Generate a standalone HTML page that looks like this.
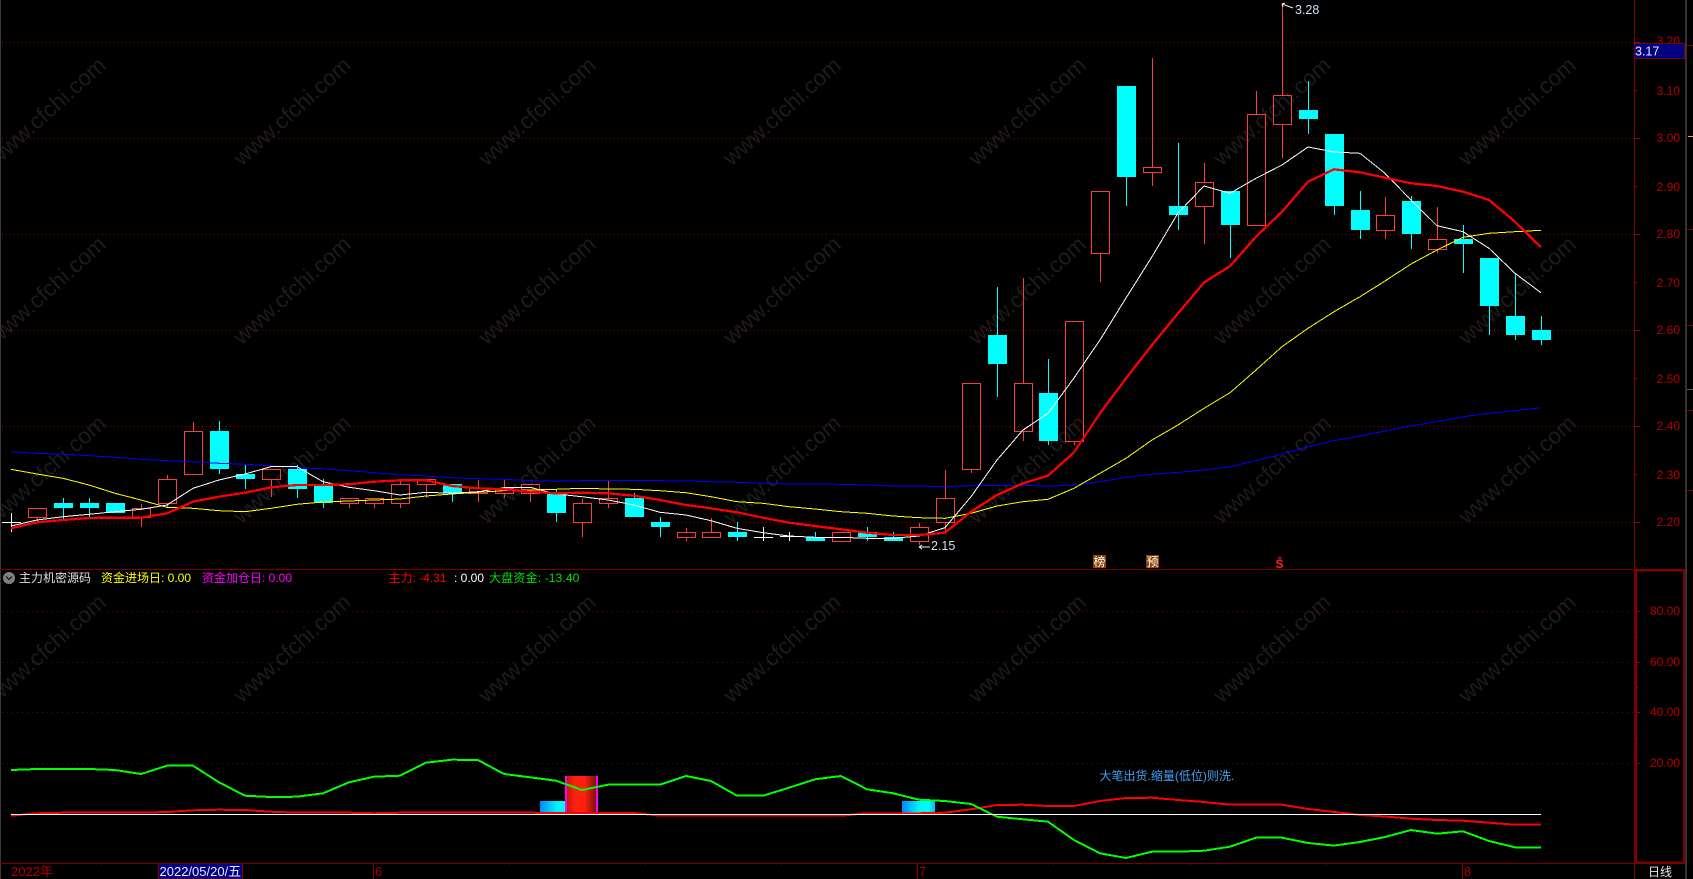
<!DOCTYPE html>
<html><head><meta charset="utf-8"><title>K线</title>
<style>
html,body{margin:0;padding:0;background:#000;width:1693px;height:879px;overflow:hidden}
svg{display:block}
text{font-family:"Liberation Sans","Noto Sans CJK SC",sans-serif;font-size:12px}
.wm text{font-size:22.5px;fill:#1c1c1c;text-anchor:middle}
.ax text{fill:#b80000;text-anchor:end}
</style></head><body>
<svg width="1693" height="879" viewBox="0 0 1693 879" xmlns="http://www.w3.org/2000/svg">
<defs>
<linearGradient id="gr"><stop offset="0" stop-color="#b01808"/><stop offset=".3" stop-color="#ff2010"/><stop offset=".6" stop-color="#ff2010"/><stop offset="1" stop-color="#601008"/></linearGradient>
<linearGradient id="gb1"><stop offset="0" stop-color="#0088ff"/><stop offset=".6" stop-color="#00f0ff"/><stop offset="1" stop-color="#00ffff"/></linearGradient>
<linearGradient id="gb2"><stop offset="0" stop-color="#0088ff"/><stop offset=".5" stop-color="#00f0ff"/><stop offset=".8" stop-color="#00ffff"/><stop offset="1" stop-color="#00b8ff"/></linearGradient>
</defs>
<rect width="1693" height="879" fill="#000"/>
<g class="wm">
<text transform="translate(52 117) rotate(-42)">www.cfchi.com</text><text transform="translate(297 117) rotate(-42)">www.cfchi.com</text><text transform="translate(542 117) rotate(-42)">www.cfchi.com</text><text transform="translate(787 117) rotate(-42)">www.cfchi.com</text><text transform="translate(1032 117) rotate(-42)">www.cfchi.com</text><text transform="translate(1277 117) rotate(-42)">www.cfchi.com</text><text transform="translate(1522 117) rotate(-42)">www.cfchi.com</text>
<text transform="translate(52 296) rotate(-42)">www.cfchi.com</text><text transform="translate(297 296) rotate(-42)">www.cfchi.com</text><text transform="translate(542 296) rotate(-42)">www.cfchi.com</text><text transform="translate(787 296) rotate(-42)">www.cfchi.com</text><text transform="translate(1032 296) rotate(-42)">www.cfchi.com</text><text transform="translate(1277 296) rotate(-42)">www.cfchi.com</text><text transform="translate(1522 296) rotate(-42)">www.cfchi.com</text>
<text transform="translate(52 475) rotate(-42)">www.cfchi.com</text><text transform="translate(297 475) rotate(-42)">www.cfchi.com</text><text transform="translate(542 475) rotate(-42)">www.cfchi.com</text><text transform="translate(787 475) rotate(-42)">www.cfchi.com</text><text transform="translate(1032 475) rotate(-42)">www.cfchi.com</text><text transform="translate(1277 475) rotate(-42)">www.cfchi.com</text><text transform="translate(1522 475) rotate(-42)">www.cfchi.com</text>
<text transform="translate(52 654) rotate(-42)">www.cfchi.com</text><text transform="translate(297 654) rotate(-42)">www.cfchi.com</text><text transform="translate(542 654) rotate(-42)">www.cfchi.com</text><text transform="translate(787 654) rotate(-42)">www.cfchi.com</text><text transform="translate(1032 654) rotate(-42)">www.cfchi.com</text><text transform="translate(1277 654) rotate(-42)">www.cfchi.com</text><text transform="translate(1522 654) rotate(-42)">www.cfchi.com</text>
</g>
<!-- frame -->
<g shape-rendering="crispEdges">
<rect x="0" y="0" width="1" height="879" fill="#3a3a3a"/>
<rect x="1685" y="0" width="2" height="879" fill="#333"/>
<path d="M2 42.5H1634M2 138.5H1634M2 234.5H1634M2 330.5H1634M2 426.5H1634M2 522.5H1634" stroke="#a00000" stroke-dasharray="1 3" fill="none"/>
<path d="M2 611.5H1634M2 662.5H1634M2 712.5H1634M2 763.5H1634" stroke="#700000" stroke-dasharray="1 4" fill="none"/>
<path d="M0 569.5H1685M0 863.5H1685M1634.5 0V879M373.5 863V879M917.5 863V879M1462.5 863V879M101.5 863v2M237.5 863v2M509.5 863v2M645.5 863v2M781.5 863v2M1053.5 863v2M1190.5 863v2M1326.5 863v2" stroke="#800000" fill="none"/>
<path d="M1634 42.5h6M1634 138.5h6M1634 234.5h6M1634 330.5h6M1634 426.5h6M1634 522.5h6M1634 90.5h3M1634 186.5h3M1634 282.5h3M1634 378.5h3M1634 474.5h3M1640 611.5h-5M1640 662.5h-5M1640 712.5h-5M1640 763.5h-5M1638 637.5h-3M1638 687.5h-3M1638 738.5h-3" stroke="#a00000" fill="none"/>
<path d="M1687 45.5h6M1687 229.5h6M1687 325.5h6M1687 410.5h6M1687 490.5h6" stroke="#800000" fill="none"/>
<path d="M1688 136.5h5" stroke="#ffa020" fill="none"/>
<path d="M1687 389.5h6" stroke="#555" fill="none"/>
<rect x="1636" y="570.5" width="48" height="292" fill="none" stroke="#800000" stroke-width="2"/>
</g>
<!-- axis labels -->
<g class="ax">
<text x="1680" y="45">3.20</text><text x="1680" y="95">3.10</text><text x="1680" y="142">3.00</text><text x="1680" y="191">2.90</text><text x="1680" y="238">2.80</text><text x="1680" y="287">2.70</text><text x="1680" y="334">2.60</text><text x="1680" y="383">2.50</text><text x="1680" y="430">2.40</text><text x="1680" y="479">2.30</text><text x="1680" y="526">2.20</text>
<text x="1680" y="615">80.00</text><text x="1680" y="666">60.00</text><text x="1680" y="716">40.00</text><text x="1680" y="767">20.00</text>
</g>
<rect x="1634.5" y="43.5" width="50" height="15" fill="#000080" stroke="#800000" shape-rendering="crispEdges"/>
<text x="1635" y="55.5" fill="#e4ecff" style="font-size:12.5px">3.17</text>
<!-- candles red -->
<path shape-rendering="crispEdges" fill="none" stroke="#ff3c3c" d="
M28.5 508.5h18v9h-18zM37.5 517.5V521
M132.5 508.5h18v9h-18zM141.5 504V508.5M141.5 517.5V527
M158.5 479.5h18v24h-18zM167.5 475V479.5M167.5 503.5V507
M184.5 431.5h18v43h-18zM193.5 422V431.5
M262.5 469.5h18v10h-18zM271.5 479.5V497
M340.5 498.5h18v5h-18zM349.5 503.5V508
M365.5 498.5h18v5h-18zM374.5 503.5V508
M391.5 484.5h18v19h-18zM400.5 479V484.5M400.5 503.5V508
M417.5 479.5h18v5h-18zM426.5 484.5V498
M469.5 488.5h18v5h-18zM478.5 480V488.5M478.5 493.5V502
M495.5 488.5h18v5h-18zM504.5 480V488.5M504.5 493.5V498
M521.5 484.5h18v9h-18zM530.5 493.5V502
M573.5 503.5h18v19h-18zM582.5 499V503.5M582.5 522.5V537
M599.5 498.5h18v5h-18zM608.5 480V498.5M608.5 503.5V508
M677.5 532.5h18v5h-18zM686.5 528V532.5M686.5 537.5V541
M702.5 532.5h18v5h-18zM711.5 518V532.5
M832.5 532.5h18v9h-18z
M910.5 527.5h18v14h-18zM919.5 523V527.5M919.5 541.5V545
M936.5 498.5h18v24h-18zM945.5 470V498.5M945.5 522.5V533
M962.5 383.5h18v86h-18zM971.5 469.5V473
M1014.5 383.5h18v48h-18zM1023.5 278V383.5M1023.5 431.5V441
M1065.5 321.5h18v120h-18zM1074.5 441.5V445
M1091.5 191.5h18v62h-18zM1100.5 253.5V282
M1143.5 167.5h18v5h-18zM1152.5 58V167.5M1152.5 172.5V186
M1195.5 182.5h18v24h-18zM1204.5 163V182.5M1204.5 206.5V244
M1247.5 114.5h18v111h-18zM1256.5 91V114.5
M1273.5 95.5h18v29h-18zM1282.5 3V95.5M1282.5 124.5V158
M1376.5 215.5h18v15h-18zM1385.5 197V215.5M1385.5 230.5V239
M1428.5 239.5h18v10h-18zM1437.5 207V239.5M1437.5 249.5V253"/>
<!-- candles cyan -->
<path shape-rendering="crispEdges" fill="#00ffff" d="
M54 503h19v5H54zM63 498h1v21h-1z
M80 503h19v5H80zM89 498h1v19h-1z
M106 503h19v10h-19z
M210 431h19v38h-19zM219 421h1v53h-1z
M236 474h19v5h-19zM245 465h1v24h-1z
M288 469h19v20h-19zM297 465h1v33h-1z
M314 486h19v17h-19zM323 479h1v29h-1z
M443 484h19v9h-19zM452 493h1v9h-1z
M547 494h19v19h-19zM556 490h1v32h-1z
M625 498h19v19h-19zM634 493h1v5h-1z
M651 522h19v5h-19zM660 517h1v20h-1z
M728 532h19v5h-19zM737 522h1v19h-1z
M806 537h19v4h-19zM815 532h1v5h-1z
M858 532h19v5h-19zM867 527h1v14h-1z
M884 537h19v4h-19zM893 532h1v5h-1z
M988 335h19v29h-19zM997 287h1v110h-1z
M1039 393h19v48h-19zM1048 359h1v86h-1z
M1117 86h19v91h-19zM1126 177h1v29h-1z
M1169 206h19v9h-19zM1178 143h1v87h-1z
M1221 191h19v34h-19zM1230 225h1v33h-1z
M1299 110h19v9h-19zM1308 81h1v53h-1z
M1325 134h19v72h-19zM1334 206h1v9h-1z
M1351 210h19v20h-19zM1360 191h1v48h-1z
M1402 201h19v33h-19zM1411 196h1v53h-1z
M1454 239h19v5h-19zM1463 225h1v48h-1z
M1480 258h19v48h-19zM1489 306h1v29h-1z
M1506 316h19v19h-19zM1515 273h1v67h-1z
M1532 330h19v10h-19zM1541 316h1v29h-1z"/>
<path shape-rendering="crispEdges" fill="none" stroke="#fff" d="M2 522.5H21M11.5 513V532M754 537.5H773M763.5 527V541M780 536.5H799M789.5 532V541"/>
<!-- moving averages -->
<g fill="none" stroke-linejoin="round" shape-rendering="crispEdges">
<polyline stroke="#0000ff" stroke-width="1" points="11,451.7 37,453.3 63,454.3 89,455.7 115,457.3 141,459.3 167,460.7 193,461.7 219,463.3 245,464.3 271,465.7 297,467.7 323,468.7 349,470.7 374,472.7 400,474.7 426,476 452,477.7 478,478.7 504,479.3 530,480.7 556,481.3 582,480.7 608,480.7 634,480.3 660,480.7 686,481 711,481.7 737,482.3 763,483.3 789,484 815,484 841,484.3 867,485 893,486 919,486 945,486.7 971,485.7 997,485.7 1023,485.3 1048,486.3 1074,485 1100,481.7 1126,477.3 1152,474.3 1178,472.3 1204,470 1230,466.7 1256,460.7 1282,454 1308,446.7 1334,440.7 1360,436 1385,431 1411,426 1437,421.7 1463,416.7 1489,413.3 1515,410.7 1541,407.7"/>
<polyline stroke="#ffff00" stroke-width="1" points="11,469.3 37,474 63,478.3 89,485 115,493.3 141,500 167,507.3 193,508.3 219,510.7 245,511.7 271,508.3 297,504.3 323,502 349,501 374,500 400,499 426,496 452,494 478,492.3 504,490.7 530,490 556,489.3 582,488.3 608,489 634,489.3 660,490.7 686,492.7 711,496.7 737,501.7 763,503.3 789,506.7 815,509 841,511.7 867,513.3 893,516 919,517.7 945,518.3 971,513.3 997,506 1023,501.7 1048,499.3 1074,488.3 1100,473.3 1126,458.3 1152,440 1178,425 1204,408.3 1230,392.7 1256,370 1282,346.7 1308,328.3 1334,311.7 1360,296.7 1385,281 1411,264 1437,250 1463,237.3 1489,233.3 1515,231.7 1541,230.3"/>
<polyline stroke="#ffffff" stroke-width="1" points="11,526 37,520 63,516.7 89,514.3 115,511.7 141,509.3 167,505 193,488.3 219,480 245,474 271,466.7 297,466.7 323,481.7 349,487.3 374,490.7 400,495 426,492.3 452,493.3 478,491.7 504,487.7 530,487.3 556,494 582,496.7 608,500 634,505 660,512.3 686,515 711,520.7 737,528.3 763,532.7 789,536 815,537.3 841,537.3 867,538.3 893,538.3 919,536 945,527.7 971,496.7 997,460 1023,430 1048,413.3 1074,378 1100,340 1126,298 1152,256.7 1178,213 1204,186 1230,193.3 1256,178.3 1282,165 1308,147 1334,152 1360,153.3 1385,173.3 1411,200 1437,225.7 1463,231.7 1489,248.3 1515,273.3 1541,292.7"/>
<polyline stroke="#ff0000" stroke-width="2.3" points="11,528.3 37,522.3 63,520 89,518 115,517.7 141,517.7 167,513.3 193,501.7 219,496.7 245,492.7 271,487.3 297,485 323,485 349,484.3 374,481.7 400,480.3 426,480.3 452,486 478,488.3 504,489.3 530,491.7 556,493.3 582,492.7 608,493.3 634,495.7 660,500 686,505 711,508.3 737,512.3 763,517.7 789,522.7 815,526 841,529.3 867,532.7 893,535 919,535 945,532.7 971,511.7 997,495 1023,483.3 1048,475.7 1074,452.3 1100,413.3 1126,378.3 1152,345 1178,313.3 1204,282.5 1230,266.2 1256,236.7 1282,211.7 1308,181.7 1334,169.3 1360,172.3 1385,177.7 1411,183.3 1437,186 1463,191.7 1489,200 1515,221.7 1541,247.3"/>
</g>
<!-- high/low labels -->
<path d="M1282 4l11 4M1282 4l3-1M1282 4l1 3M919 547h11M919 547l3-2M919 547l3 2" stroke="#f0f0f0" fill="none"/>
<text x="1295" y="14" fill="#d0e0f0" style="font-size:12.5px">3.28</text>
<text x="931" y="550" fill="#d0e0f0" style="font-size:12.5px">2.15</text>
<!-- markers -->
<rect x="1093" y="555" width="13" height="13" fill="#8b4000"/>
<text x="1093.5" y="566" fill="#fff" style="font-size:12px">榜</text>
<rect x="1146" y="555" width="13" height="13" fill="#8b4000"/>
<text x="1146.5" y="566" fill="#fff" style="font-size:12px">预</text>
<text x="1275.5" y="568" fill="#ff2020" style="font-size:12px;font-weight:bold">Ŝ</text>
<!-- legend -->
<circle cx="9" cy="578" r="6" fill="#808080"/>
<path d="M6 576.5l3 3 3-3" stroke="#202020" stroke-width="1.5" fill="none"/>
<text x="19" y="582" fill="#e0e0e0">主力机密源码</text>
<text x="101" y="582" fill="#ffff00">资金进场日: 0.00</text>
<text x="202" y="582" fill="#ff00ff">资金加仓日: 0.00</text>
<text x="388.500" y="582" fill="#ff0000">主力: -4.31</text>
<text x="454" y="582" fill="#ffffff">: 0.00</text>
<text x="489" y="582" fill="#00e000" style="letter-spacing:.15px">大盘资金: -13.40</text>
<!-- indicator bars -->
<g shape-rendering="crispEdges">
<rect x="540" y="801" width="27" height="12" fill="url(#gb1)"/>
<rect x="902" y="801" width="33" height="12" fill="url(#gb2)"/>
<rect x="565" y="776" width="33" height="37" fill="url(#gr)"/>
<rect x="565" y="776" width="2" height="37" fill="#ff00ff"/>
<rect x="596" y="776" width="2" height="37" fill="#ff00ff"/>
</g>
<g fill="none" shape-rendering="crispEdges">
<polyline stroke="#ff0000" stroke-width="2" points="11,815.7 37,813.3 63,812.7 89,812.7 115,812.7 141,812.7 167,812 193,810.3 219,809.7 245,810 271,811.7 297,812.7 323,812.7 349,812.7 374,813.3 400,812.7 426,812.7 452,812.7 478,812.7 504,812.7 530,812.7 556,813 582,813 608,813 634,813 660,815.7 686,815.7 711,815.7 737,815.7 763,815.7 789,815.7 815,815.7 841,815.7 867,813.3 893,813.3 919,813.3 945,812.7 971,809.3 997,805 1023,804.7 1048,806 1074,806 1100,801 1126,798 1152,797.7 1178,800 1204,802 1230,804.7 1256,804.7 1282,804.7 1308,809 1334,812 1360,815 1385,816.5 1411,818.7 1437,820 1463,820.7 1489,822.7 1515,824.7 1541,824.7"/>
<polyline stroke="#00ff00" stroke-width="2" points="11,770 37,769 63,769 89,769 115,770 141,774 167,765.7 193,765.7 219,782.3 245,795.7 271,797 297,796.7 323,793.3 349,782.3 374,776.7 400,775.7 426,762.7 452,759.7 478,760 504,774 530,777.3 556,780.7 582,790 608,784.7 634,784.7 660,784.7 686,776 711,781 737,795.700 763,795.700 789,787.7 815,779.3 841,776 867,789.3 893,793.3 919,799.7 945,801 971,804 997,816.7 1023,819.3 1048,821.7 1074,840 1100,853.3 1126,858 1152,851.7 1178,851.7 1204,850.7 1230,846.7 1256,837.7 1282,837.7 1308,843 1334,845.6 1360,842 1385,837 1411,830 1437,833.7 1463,831.3 1489,841 1515,847.3 1541,847.7"/>
<path d="M11 814.5H1541" stroke="#fff" stroke-width="1"/>
</g>
<text x="1099.500" y="780" fill="#40a0f0">大笔出货.缩量(低位)则洗.</text>
<!-- bottom -->
<text x="11" y="876" fill="#b00000" style="font-size:13px">2022年</text>
<rect x="158.500" y="863.500" width="84" height="15.500" fill="#000080" stroke="#800000" shape-rendering="crispEdges"/>
<text x="159.500" y="876" fill="#e4ecff" style="font-size:13px">2022/05/20/五</text>
<text x="375" y="876" fill="#b00000" style="font-size:12.5px">6</text>
<text x="919" y="876" fill="#b00000" style="font-size:12.5px">7</text>
<text x="1464" y="876" fill="#b00000" style="font-size:12.5px">8</text>
<text x="1648" y="876" fill="#e8e8e8">日线</text>
</svg>
</body></html>
